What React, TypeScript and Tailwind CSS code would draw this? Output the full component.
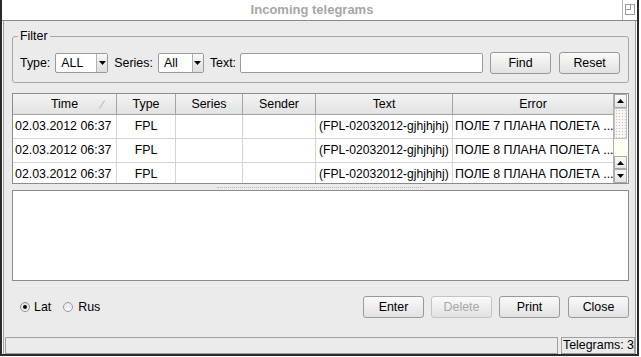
import React from "react";

const F = "font-['Liberation_Sans',Arial,sans-serif]";
const T = "text-[12.4px]";

function Tri({ up }: { up?: boolean }) {
  return (
    <svg width="7" height="4" viewBox="0 0 7 4">
      {up ? <polygon points="0,4 7,4 3.5,0" fill="#000" /> : <polygon points="0,0 7,0 3.5,4" fill="#000" />}
    </svg>
  );
}

function Combo({ value, width }: { value: string; width: string }) {
  return (
    <div className={`flex h-[20px] ${width} items-stretch border border-[#9a9a9a] bg-white rounded-[2px]`}>
      <div className={`flex flex-1 items-center pl-[5px] ${T} text-black`}>{value}</div>
      <div className="flex w-[11px] items-center justify-center border-l border-[#b0b0b0] bg-gradient-to-b from-[#f8f8f8] to-[#dedede]">
        <Tri />
      </div>
    </div>
  );
}

function Btn({ label, disabled, width = "w-[61px]" }: { label: string; disabled?: boolean; width?: string }) {
  return (
    <div
      className={`flex h-[22px] ${width} items-center justify-center rounded-[3px] border ${T} bg-gradient-to-b from-[#fafafa] to-[#e2e2e2] ${
        disabled ? "border-[#c4c4c4] text-[#a8a8a8]" : "border-[#9a9a9a] text-black"
      }`}
    >
      {label}
    </div>
  );
}

const cols = [
  { w: "w-[104px]", name: "Time" },
  { w: "w-[59px]", name: "Type" },
  { w: "w-[67px]", name: "Series" },
  { w: "w-[73px]", name: "Sender" },
  { w: "w-[137px]", name: "Text" },
  { w: "w-[160px]", name: "Error" },
];

const rows = [
  ["02.03.2012 06:37", "FPL", "", "", "(FPL-02032012-gjhjhjhj)", "ПОЛЕ 7 ПЛАНА ПОЛЕТА ..."],
  ["02.03.2012 06:37", "FPL", "", "", "(FPL-02032012-gjhjhjhj)", "ПОЛЕ 8 ПЛАНА ПОЛЕТА ..."],
  ["02.03.2012 06:37", "FPL", "", "", "(FPL-02032012-gjhjhjhj)", "ПОЛЕ 8 ПЛАНА ПОЛЕТА ..."],
];

function ScrollBtn({ up, h }: { up?: boolean; h: string }) {
  return (
    <div className={`flex ${h} items-center justify-center border border-[#a8a8a8] bg-gradient-to-b from-[#fafafa] to-[#e4e4e4]`}>
      <Tri up={up} />
    </div>
  );
}

export default function App() {
  return (
    <div className={`w-[641px] h-[357px] bg-white ${F} text-black`}>
      <div className="flex h-[356px] w-[639px] flex-col border-x-2 border-b-2 border-[#2a2a2a]">
        {/* Title bar */}
        <div className="flex h-[21px] border-b border-[#8a8a8a] bg-white">
          <div className="flex flex-1 items-center justify-center text-[13px] font-bold text-[#a6a6a6]">
            Incoming telegrams
          </div>
          <div className="flex w-[15px] items-start justify-center border-l border-[#b4b4b4] pt-[4px]">
            <svg width="10" height="11" viewBox="0 0 10 11">
              <rect x="0.5" y="0.5" width="9" height="10" fill="none" stroke="#9a9a9a" />
              <rect x="0.5" y="0.5" width="5" height="5" fill="none" stroke="#9a9a9a" />
            </svg>
          </div>
        </div>
        {/* Body */}
        <div className="flex flex-1 flex-col bg-white px-[1px]">
          <div className="flex flex-1 flex-col border-x border-[#a0a0a0] bg-[#ebebeb]">
            {/* Filter group */}
            <div className="relative ml-[8px] mr-[6px] mt-[15px] h-[47px] rounded-[3px] border border-[#a8a8a8]">
              <div className={`absolute -top-[8px] left-[5px] bg-[#ebebeb] px-[2px] ${T} leading-[14px]`}>Filter</div>
              <div className="flex items-center pl-[7px] pt-[15px]">
                <span className={T}>Type:</span>
                <div className="ml-[5px]">
                  <Combo value="ALL" width="w-[53px]" />
                </div>
                <span className={`ml-[6px] ${T}`}>Series:</span>
                <div className="ml-[5px]">
                  <Combo value="All" width="w-[46px]" />
                </div>
                <span className={`ml-[6px] ${T}`}>Text:</span>
                <div className="ml-[4px] h-[20px] w-[243px] rounded-[2px] border border-[#9a9a9a] bg-white" />
                <div className="ml-[7px]">
                  <Btn label="Find" width="w-[61px]" />
                </div>
                <div className="ml-[8px]">
                  <Btn label="Reset" width="w-[61px]" />
                </div>
              </div>
            </div>

            {/* Table */}
            <div className="ml-[8px] mr-[6px] mt-[10px] flex h-[91px] border border-[#8c8c8c] bg-white">
              <div className="flex w-[600px] flex-col overflow-hidden">
                <div className="flex h-[21px] shrink-0 border-b border-[#a4a4a4] bg-gradient-to-b from-[#f4f4f4] to-[#e2e2e2]">
                  {cols.map((c, i) => (
                    <div
                      key={c.name}
                      className={`relative flex ${c.w} shrink-0 items-center justify-center border-r border-[#a4a4a4] ${T} ${i === 5 ? "border-r-0" : ""}`}
                    >
                      {c.name}
                      {i === 0 && (
                        <svg className="absolute right-[11px] top-[6px]" width="6" height="9" viewBox="0 0 6 9">
                          <line x1="0.5" y1="8.5" x2="5.5" y2="0.5" stroke="#b0b0b0" />
                        </svg>
                      )}
                    </div>
                  ))}
                </div>
                {rows.map((r, ri) => (
                  <div key={ri} className="flex h-[24px] shrink-0 border-b border-[#d4d4d4]">
                    {r.map((v, ci) => (
                      <div
                        key={ci}
                        className={`flex ${cols[ci].w} shrink-0 items-center overflow-hidden whitespace-nowrap border-r border-[#d4d4d4] ${
                          ci === 4 ? "text-[12.1px]" : T
                        } ${ci === 1 ? "justify-center" : ci === 4 ? "pl-[3px]" : "pl-[2px]"} ${ci === 5 ? "border-r-0" : ""}`}
                      >
                        {v}
                      </div>
                    ))}
                  </div>
                ))}
              </div>
              <div className="flex w-[14px] flex-col border-l border-[#b0b0b0]">
                <ScrollBtn up h="h-[14px]" />
                <div className="h-[31px] border border-[#c4c4c4] bg-[#f6f6f6] bg-[radial-gradient(#d8b8a8_1px,transparent_1px)] bg-[length:3px_3px]" />
                <div className="flex-1 bg-[#fffff0]" />
                <ScrollBtn up h="h-[13px]" />
                <ScrollBtn h="h-[14px]" />
              </div>
            </div>

            {/* Splitter */}
            <div className="flex h-[6px] items-center justify-center">
              <div className="h-0 w-[206px] border-t border-dotted border-[#b8b8c8]" />
            </div>

            {/* Text area */}
            <div className="ml-[8px] mr-[6px] h-[91px] border border-[#8c8c8c] bg-white" />

            {/* Bottom row */}
            <div className="mt-[15px] flex h-[22px] items-center pl-[16px] pr-[6px]">
              <div className="flex items-center">
                <div className="flex h-[10px] w-[10px] items-center justify-center rounded-full border border-[#8a8a8a] bg-gradient-to-b from-[#e0e0e0] to-[#f8f8f8]">
                  <div className="h-[4px] w-[4px] rounded-full bg-black" />
                </div>
                <span className={`ml-[4px] ${T}`}>Lat</span>
              </div>
              <div className="ml-[12px] flex items-center">
                <div className="h-[10px] w-[10px] rounded-full border border-[#9a9a9a] bg-gradient-to-b from-[#e8e8e8] to-[#fcfcfc]" />
                <span className={`ml-[5px] ${T}`}>Rus</span>
              </div>
              <div className="flex-1" />
              <Btn label="Enter" />
              <div className="ml-[7px]">
                <Btn label="Delete" disabled />
              </div>
              <div className="ml-[7px]">
                <Btn label="Print" />
              </div>
              <div className="ml-[8px]">
                <Btn label="Close" />
              </div>
            </div>

            <div className="flex-1" />

            {/* Status bar */}
            <div className="flex h-[17px] pl-[1px]">
              <div className="flex-1 border border-[#a0a0a0]" />
              <div className={`ml-[3px] flex w-[74px] items-center whitespace-nowrap border border-[#a0a0a0] pl-[1px] ${T}`}>
                Telegrams: 3
              </div>
            </div>
          </div>
        </div>
      </div>
    </div>
  );
}
